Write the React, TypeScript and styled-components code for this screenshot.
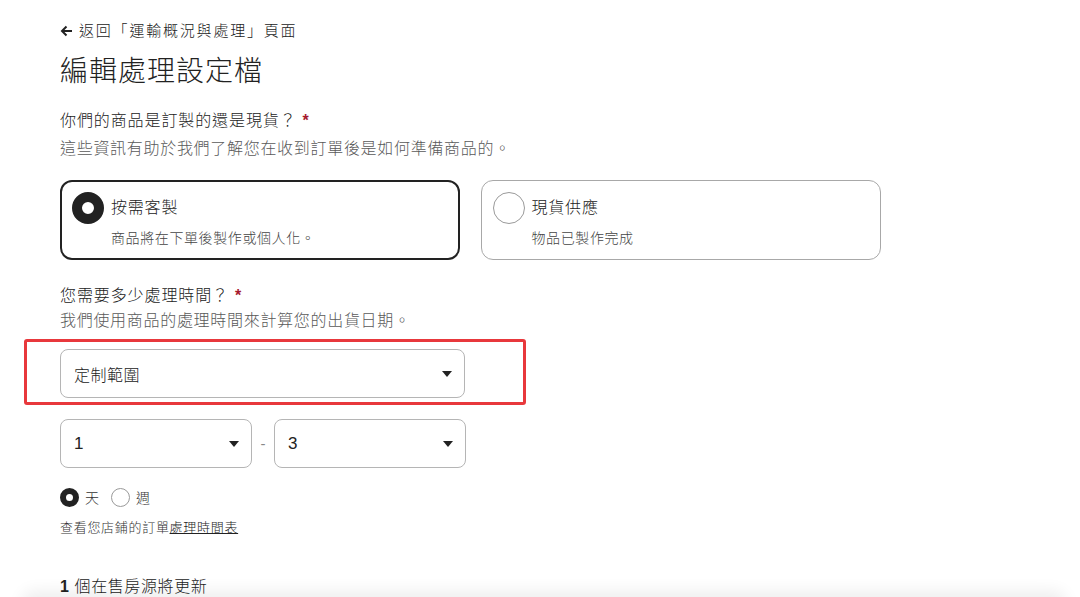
import React, { useState } from "react";
import styled, { createGlobalStyle } from "styled-components";

const GlobalStyle = createGlobalStyle`
  html, body {
    margin: 0;
    padding: 0;
    background: #fff;
  }
  body {
    font-family: "Liberation Sans", "Noto Sans CJK TC", sans-serif;
    color: #222;
    overflow: hidden;
  }
`;

const Page = styled.div`
  position: relative;
  padding: 20px 0 0 60px;
  width: 1080px;
  height: 597px;
  box-sizing: border-box;
`;

const BackLink = styled.a`
  display: flex;
  align-items: center;
  gap: 6px;
  font-size: 15px;
  line-height: 22px;
  font-weight: 300;
  color: #222;
  text-decoration: none;
  letter-spacing: 1.8px;
`;

const Title = styled.h1`
  margin: 12px 0 0;
  font-size: 28px;
  line-height: 36px;
  font-weight: 300;
  letter-spacing: 1px;
  color: #222;
`;

const Question = styled.div<{ $top: number }>`
  margin-top: ${(p) => p.$top}px;
  font-size: 16px;
  line-height: 22px;
  font-weight: 300;
  letter-spacing: 0.9px;
  color: #222;
`;

const Star = styled.span`
  color: #a61a2e;
  margin-left: 6px;
  font-weight: 700;
`;

const Hint = styled.div<{ $top: number }>`
  margin-top: ${(p) => p.$top}px;
  font-size: 16px;
  line-height: 24px;
  font-weight: 300;
  letter-spacing: 0.7px;
  color: #595959;
`;

const Cards = styled.div`
  display: flex;
  gap: 21px;
  margin-top: 19px;
`;

const Card = styled.div<{ $active: boolean }>`
  width: 400px;
  height: 80px;
  box-sizing: border-box;
  border: ${(p) => (p.$active ? "2px solid #222" : "1.5px solid #a8a8a8")};
  border-radius: 12px;
  padding: ${(p) => (p.$active ? "10px 12px 0 10px" : "10.5px 12px 0 10.5px")};
  cursor: pointer;
`;

const CardRow = styled.div`
  display: flex;
  align-items: center;
  gap: 7px;
`;

const Radio = styled.span<{ $on: boolean; $size: number; $ring: number }>`
  display: inline-block;
  width: ${(p) => p.$size}px;
  height: ${(p) => p.$size}px;
  box-sizing: border-box;
  border-radius: 50%;
  border: ${(p) => (p.$on ? `${p.$ring}px solid #222` : "1px solid #9a9a9a")};
  background: #fff;
  flex-shrink: 0;
`;

const CardTitle = styled.span`
  font-size: 16px;
  line-height: 24px;
  font-weight: 300;
  letter-spacing: 0.8px;
`;

const CardSub = styled.div`
  margin: 4px 0 0 39px;
  font-size: 14px;
  line-height: 20px;
  font-weight: 300;
  letter-spacing: 0.6px;
  color: #444;
`;

const Select = styled.div<{ $w: number; $size?: number }>`
  width: ${(p) => p.$w}px;
  height: 49px;
  box-sizing: border-box;
  border: 1px solid #b5b5b5;
  border-radius: 8px;
  display: flex;
  align-items: center;
  justify-content: space-between;
  padding: 0 12px 0 13px;
  font-size: ${(p) => p.$size ?? 16}px;
  font-weight: 300;
  letter-spacing: 0.5px;
  color: #222;
`;

const Caret = styled.span`
  width: 0;
  height: 0;
  border-left: 5px solid transparent;
  border-right: 5px solid transparent;
  border-top: 6px solid #222;
`;

const MainSelect = styled.div`
  margin-top: 16px;
`;

const Highlight = styled.div`
  position: absolute;
  left: 24px;
  top: 339px;
  width: 502px;
  height: 66px;
  box-sizing: border-box;
  border: 3px solid #e8383c;
  border-radius: 3px;
  pointer-events: none;
`;

const RangeRow = styled.div`
  display: flex;
  align-items: center;
  margin-top: 21px;
`;

const Dash = styled.span`
  width: 22px;
  text-align: center;
  color: #888;
  font-size: 15px;
`;

const UnitRow = styled.div`
  display: flex;
  align-items: center;
  margin-top: 19px;
  height: 20px;
`;

const UnitLabel = styled.label`
  display: flex;
  align-items: center;
  gap: 6px;
  font-size: 14px;
  font-weight: 300;
  margin-right: 12px;
  color: #333;
`;

const Note = styled.div`
  margin-top: 11px;
  font-size: 13px;
  line-height: 20px;
  font-weight: 300;
  letter-spacing: 0.7px;
  color: #333;

  & a {
    color: #222;
    text-decoration: underline;
  }
`;

const Footer = styled.div`
  margin-top: 38px;
  font-size: 16px;
  line-height: 22px;
  font-weight: 300;
  letter-spacing: 0.6px;
  color: #222;

  & b {
    font-weight: 700;
  }
`;

const BottomShade = styled.div`
  position: fixed;
  left: 22px;
  right: 14px;
  bottom: -40px;
  height: 40px;
  border-radius: 12px;
  box-shadow: 0 -6px 16px rgba(0, 0, 0, 0.07);
  background: #fff;
`;

const ArrowLeft = () => (
  <svg width="13" height="12" viewBox="0 0 13 12" fill="none">
    <path d="M12 6H2M6.5 1.5L2 6l4.5 4.5" stroke="#222" strokeWidth="2" strokeLinejoin="miter" />
  </svg>
);

export default function App() {
  const [kind, setKind] = useState<"made" | "ready">("made");
  const [unit, setUnit] = useState<"day" | "week">("day");

  const options = [
    { id: "made" as const, title: "按需客製", sub: "商品將在下單後製作或個人化。" },
    { id: "ready" as const, title: "現貨供應", sub: "物品已製作完成" },
  ];

  return (
    <>
      <GlobalStyle />
      <Page>
        <BackLink href="#">
          <ArrowLeft />
          返回「運輸概況與處理」頁面
        </BackLink>
        <Title>編輯處理設定檔</Title>

        <Question $top={20}>
          你們的商品是訂製的還是現貨？<Star>*</Star>
        </Question>
        <Hint $top={5}>這些資訊有助於我們了解您在收到訂單後是如何準備商品的。</Hint>

        <Cards>
          {options.map((o) => (
            <Card key={o.id} $active={kind === o.id} onClick={() => setKind(o.id)}>
              <CardRow>
                <Radio $on={kind === o.id} $size={32} $ring={10} />
                <CardTitle>{o.title}</CardTitle>
              </CardRow>
              <CardSub>{o.sub}</CardSub>
            </Card>
          ))}
        </Cards>

        <Question $top={25}>
          您需要多少處理時間？<Star>*</Star>
        </Question>
        <Hint $top={2}>我們使用商品的處理時間來計算您的出貨日期。</Hint>

        <MainSelect>
          <Select $w={405}>
            定制範圍
            <Caret />
          </Select>
        </MainSelect>
        <Highlight />

        <RangeRow>
          <Select $w={192} $size={17}>
            1
            <Caret />
          </Select>
          <Dash>-</Dash>
          <Select $w={192} $size={17}>
            3
            <Caret />
          </Select>
        </RangeRow>

        <UnitRow>
          <UnitLabel onClick={() => setUnit("day")}>
            <Radio $on={unit === "day"} $size={19} $ring={6} />天
          </UnitLabel>
          <UnitLabel onClick={() => setUnit("week")}>
            <Radio $on={unit === "week"} $size={19} $ring={6} />週
          </UnitLabel>
        </UnitRow>

        <Note>
          查看您店鋪的訂單<a href="#">處理時間表</a>
        </Note>

        <Footer>
          <b>1</b> 個在售房源將更新
        </Footer>
      </Page>
      <BottomShade />
    </>
  );
}
